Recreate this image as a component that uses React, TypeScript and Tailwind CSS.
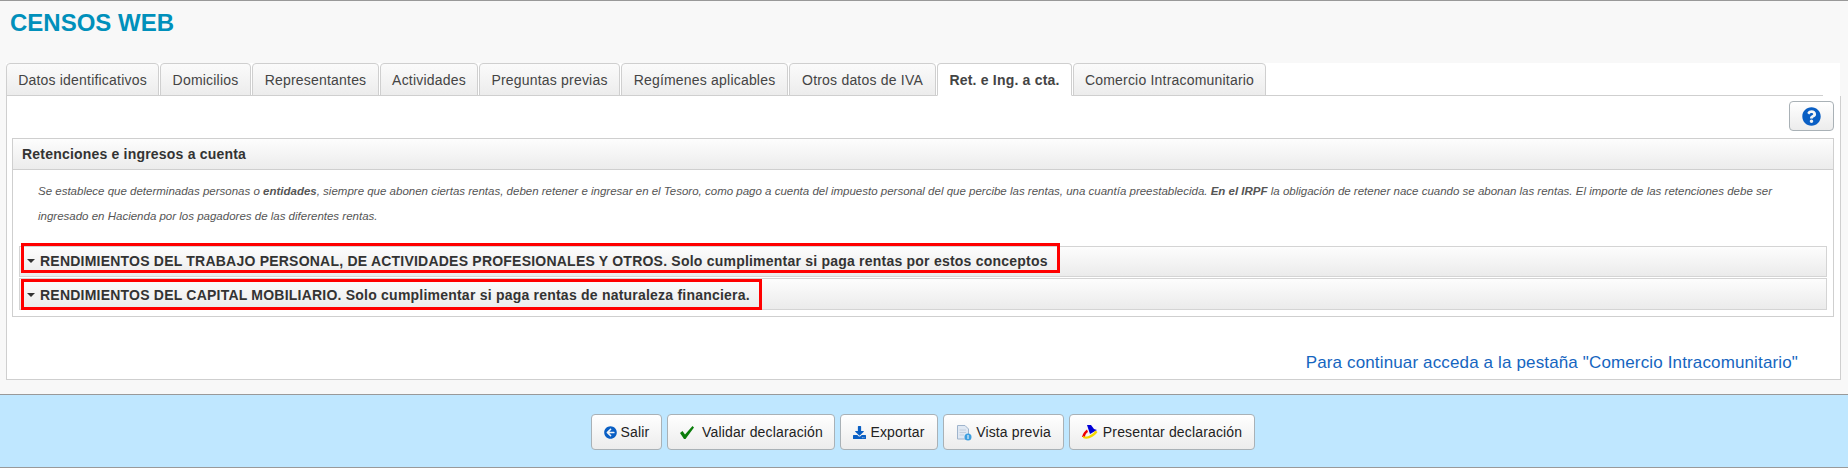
import { FaArrowCircleLeft, FaDownload, FaQuestionCircle } from "react-icons/fa";

const tabs: [string, number, boolean?][] = [
  ["Datos identificativos", 153],
  ["Domicilios", 91],
  ["Representantes", 127],
  ["Actividades", 98],
  ["Preguntas previas", 141],
  ["Regímenes aplicables", 167],
  ["Otros datos de IVA", 147],
  ["Ret. e Ing. a cta.", 135, true],
  ["Comercio Intracomunitario", 193],
];

function Check() {
  return (
    <svg width="16" height="15" viewBox="0 0 16 15" className="shrink-0">
      <path d="M1 8 L3.500 6 L6 9.500 L13.500 1 L15 2.500 L6.500 14 L5 14 Z" fill="#0b7d0b" />
    </svg>
  );
}

function Preview() {
  return (
    <svg width="16" height="17" viewBox="0 0 16 17" className="shrink-0">
      <path d="M1.500 1.500 H9 L12.500 5 V15 H1.500 Z" fill="#dfe8f3" stroke="#9fb4cc" />
      <path d="M3.500 6 H10 M3.500 8.500 H10 M3.500 11 H8" stroke="#c3cfdd" />
      <circle cx="12" cy="13" r="3.500" fill="#3d9fe0" />
      <path d="M12 11 V15" stroke="#fff" />
    </svg>
  );
}

function Aeat() {
  return (
    <svg width="16" height="14" viewBox="0 0 16 14" className="shrink-0">
      <path d="M5 0 H9 L12 4 L15 5 L8 9 Z" fill="#0000d8" />
      <path d="M0 12 C1 8 3 6 5 4.500 L6 7 C4 8 3 10 3 12 Z" fill="#ee0000" />
      <path d="M1 11 C6 13 11 9 13.500 5.500 L15.500 7 C12 12 6 15 1 13 Z" fill="#f5d800" />
    </svg>
  );
}

function Button({ w, icon, label, gap = "gap-[4px]" }: { w: number; icon: React.ReactNode; label: string; gap?: string }) {
  return (
    <button
      style={{ width: w }}
      className={`h-[36px] flex items-center justify-center ${gap} rounded-[4px] border border-[#a9b1b6] bg-gradient-to-b from-white to-[#ececec] text-[14px] tracking-[0.15px] text-[#222]`}
    >
      {icon}
      <span>{label}</span>
    </button>
  );
}

function Section({ label, rowClass, boxClass }: { label: string; rowClass: string; boxClass: string }) {
  return (
    <div className={`${rowClass} border border-[#d4d4d4] bg-gradient-to-b from-[#fdfdfd] to-[#ebebeb] flex items-center`}>
      <span className={`${boxClass} ml-[1px] inline-flex items-center gap-[5px] border-[3px] border-[#ff0000] pl-[3px] pr-[9px] text-[14px] leading-[16px] font-bold tracking-[0.22px] text-[#333] whitespace-nowrap`}>
        <span className="w-0 h-0 border-x-[4px] border-x-transparent border-t-[4px] border-t-[#333]" />
        {label}
      </span>
    </div>
  );
}

export default function App() {
  return (
    <div className="h-[470px] bg-white font-['Liberation_Sans',Arial,sans-serif] overflow-hidden">
      <div className="h-[468px] bg-[#f8f8f8] border-t border-[#999] flex flex-col">
        <h1 className="h-[62px] pl-[10px] pt-[9px] text-[24px] leading-[25px] font-bold text-[#0090bb]">CENSOS WEB</h1>
        <div className="ml-[6px] mr-[8px] h-[33px] bg-white pr-[17px]">
          <div className="h-[33px] border-b border-[#cfcfcf] flex gap-[1px]">
            {tabs.map(([t, w, active]) => (
              <div
                key={t}
                style={{ width: w }}
                className={`h-[33px] shrink-0 flex items-center justify-center pt-[1px] rounded-t-[4px] border border-[#cfcfcf] text-[14px] tracking-[0.2px] ${
                  active
                    ? "bg-white border-b-white font-bold text-[#444]"
                    : "bg-gradient-to-b from-[#fbfbfb] to-[#ececec] text-[#444]"
                }`}
              >
                {t}
              </div>
            ))}
          </div>
        </div>
        <div className="ml-[6px] mr-[7px] h-[284px] bg-white border border-t-0 border-[#cfcfcf] pl-[5px] pr-[6px] flex flex-col">
          <div className="flex justify-end pt-[5px]">
            <button className="w-[45px] h-[30px] rounded-[4px] border border-[#a9b1b6] bg-gradient-to-b from-white to-[#ececec] flex items-center justify-center">
              <FaQuestionCircle className="text-[#0a5fc4] text-[19px]" />
            </button>
          </div>
          <div className="mt-[7px] h-[179px] border border-[#cfcfcf] flex flex-col">
            <div className="h-[31px] shrink-0 border-b border-[#cfcfcf] bg-gradient-to-b from-[#fdfdfd] to-[#ececec] flex items-center pl-[9px] pt-[1px] text-[14px] tracking-[0.2px] font-bold text-[#333]">
              Retenciones e ingresos a cuenta
            </div>
            <div className="px-[6px]">
              <p className="pl-[19px] pr-[30px] pt-[9px] text-[11.500px] leading-[25px] italic text-[#555]">
                Se establece que determinadas personas o <b>entidades</b>, siempre que abonen ciertas rentas, deben retener e ingresar en el Tesoro, como pago a cuenta del impuesto personal del que percibe las rentas, una cuantía preestablecida. <b>En el IRPF</b> la obligación de retener nace cuando se abonan las rentas. El importe de las retenciones debe ser ingresado en Hacienda por los pagadores de las diferentes rentas.
              </p>
              <div className="mt-[17px]">
                <Section rowClass="h-[31px]" boxClass="h-[30px] -mt-[7px] pt-[6px]" label="RENDIMIENTOS DEL TRABAJO PERSONAL, DE ACTIVIDADES PROFESIONALES Y OTROS. Solo cumplimentar si paga rentas por estos conceptos" />
                <Section rowClass="h-[32px] mt-[1px]" boxClass="h-[31px] pt-[1px]" label="RENDIMIENTOS DEL CAPITAL MOBILIARIO. Solo cumplimentar si paga rentas de naturaleza financiera." />
              </div>
            </div>
          </div>
          <div className="mt-[37px] pr-[36px] text-right text-[17px] tracking-[0.14px] leading-[18px] text-[#1565c0]">
            Para continuar acceda a la pestaña "Comercio Intracomunitario"
          </div>
        </div>
        <div className="mt-[14px] flex-1 border-y border-[#999] bg-[#bfe7ff] flex justify-center gap-[5px] pt-[19px] pr-[2px]">
          <Button w={71} label="Salir" icon={<FaArrowCircleLeft className="text-[#0a5fc4] text-[13px]" />} />
          <Button w={168} label="Validar declaración" gap="gap-[7px]" icon={<Check />} />
          <Button w={98} label="Exportar" icon={<FaDownload className="text-[#0a5fc4] text-[13px]" />} />
          <Button w={121} label="Vista previa" icon={<Preview />} />
          <Button w={186} label="Presentar declaración" gap="gap-[5px]" icon={<Aeat />} />
        </div>
      </div>
    </div>
  );
}
